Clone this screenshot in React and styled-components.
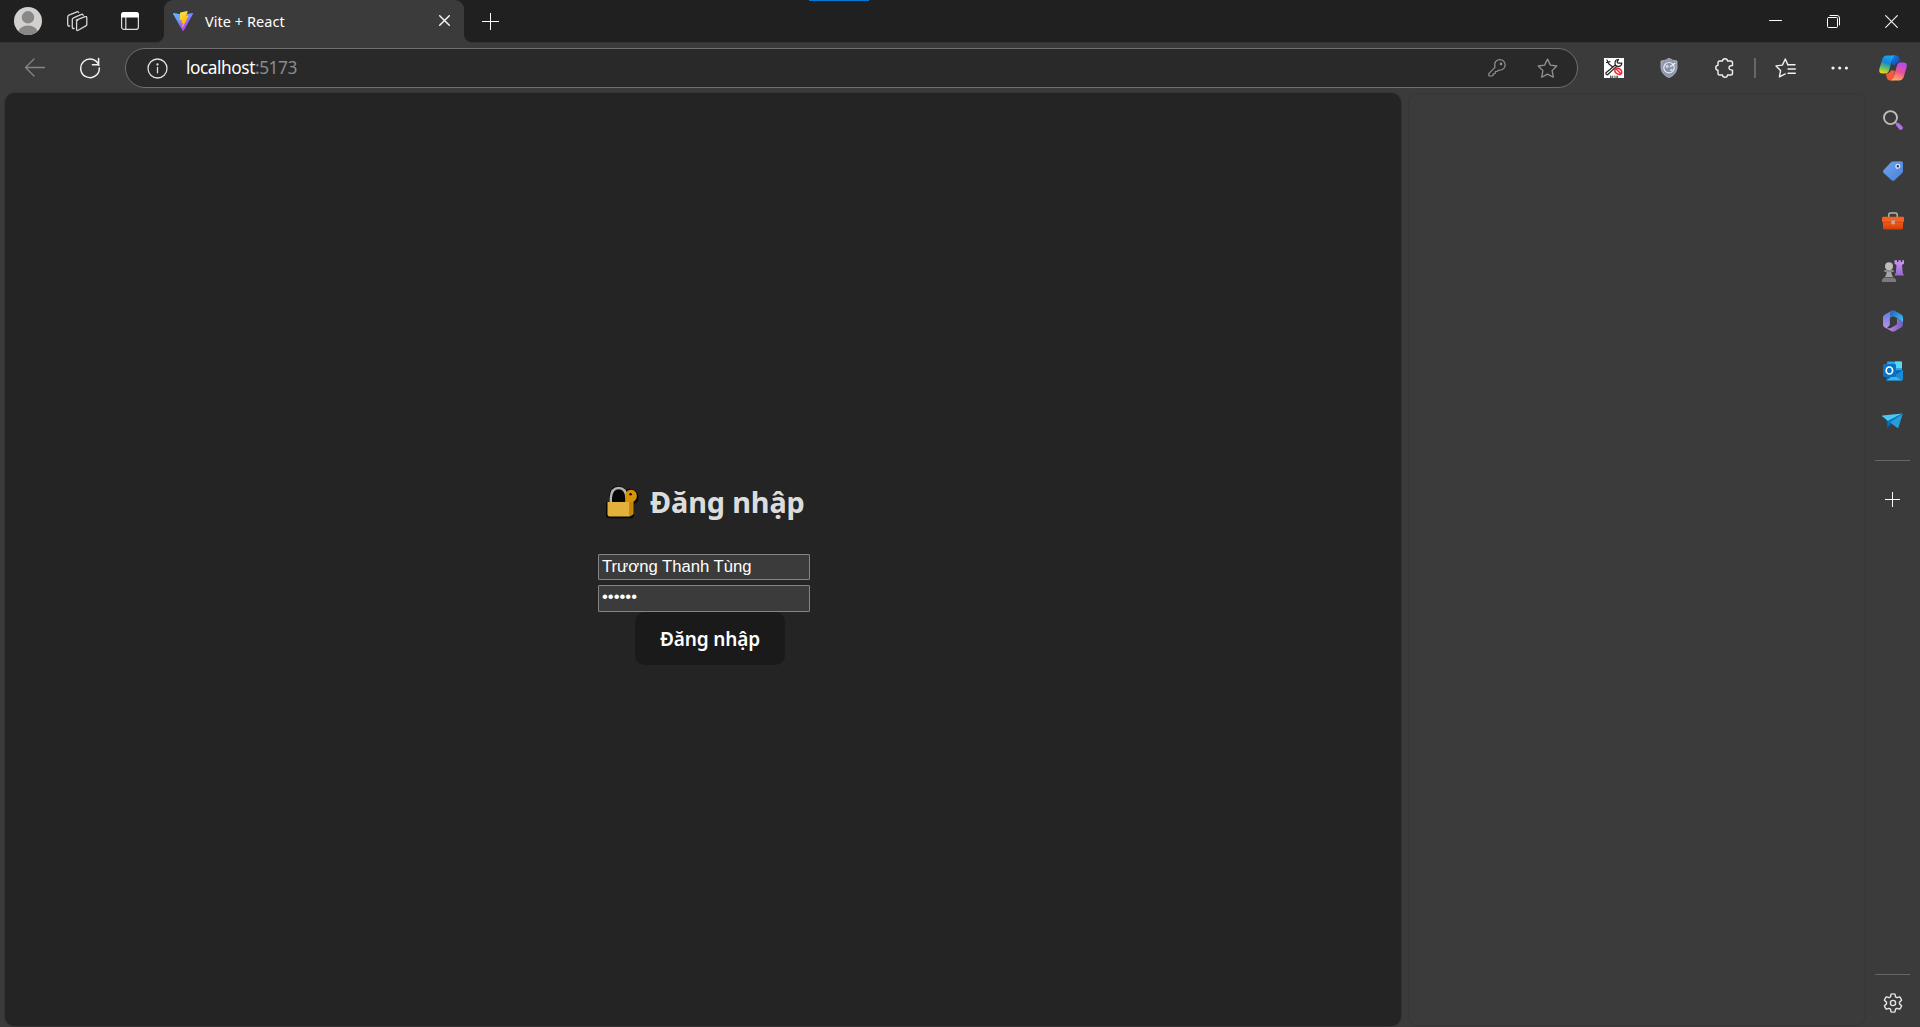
import React from 'react';
import styled, { createGlobalStyle } from 'styled-components';

const ui = '"Noto Sans", "Open Sans", sans-serif';

const GlobalStyle = createGlobalStyle`
  * { box-sizing: border-box; }
  html, body { margin: 0; background: #3b3b3b; overflow: hidden; }
`;

const Window = styled.div`
  display: flex;
  flex-direction: column;
  width: 1920px;
  height: 1027px;
  background: #3b3b3b;
  color: #fff;
  font-family: ${ui};
`;

const Icon = styled.svg`
  display: block;
  flex: none;
  fill: none;
  stroke: ${p => p.$color || 'none'};
  stroke-width: ${p => p.$w || 1.3};
  stroke-linecap: ${p => p.$cap || 'round'};
  stroke-linejoin: round;
`;

/* ---------- title bar ---------- */
const TitleBar = styled.header`
  display: flex;
  height: 43px;
  flex: none;
`;
const TitleLeft = styled.div`
  display: flex;
  align-items: center;
  width: 164px;
  height: 42px;
  padding-left: 14px;
  background: #202020;
  border-bottom-right-radius: 8px;
  box-shadow: 0 1px 0 #343434;
`;
const TitleRight = styled.div`
  position: relative;
  display: flex;
  align-items: center;
  flex: 1;
  height: 42px;
  padding-left: 18px;
  background: #202020;
  border-bottom-left-radius: 8px;
  box-shadow: 0 1px 0 #343434;
`;
const DragHandle = styled.div`
  position: absolute;
  left: 345px;
  top: 0;
  width: 60px;
  height: 1px;
  background: #0078d7;
`;
const TabSlot = styled.div`
  width: 300px;
  background: linear-gradient(#202020 50%, #3b3b3b 50%);
`;
const Tab = styled.div`
  display: flex;
  align-items: center;
  height: 43px;
  padding: 0 14px 2px 9px;
  background: #3b3b3b;
  border-radius: 9px 9px 0 0;
`;
const TabTitle = styled.span`
  flex: 1;
  margin-left: 12px;
  font-size: 14.5px;
  line-height: 20px;
  letter-spacing: 0.05px;
  white-space: nowrap;
`;
const WindowButtons = styled.div`
  display: flex;
  gap: 45px;
  margin-left: auto;
  padding: 1px 22px 0 0;
`;
const Gap = styled.div`
  flex: none;
  width: ${p => p.$w || 1}px;
  height: ${p => p.$h || 0}px;
`;

/* ---------- toolbar ---------- */
const Toolbar = styled.div`
  display: flex;
  align-items: center;
  flex: none;
  height: 50px;
  padding-left: 24px;
`;
const AddressBar = styled.div`
  display: flex;
  align-items: center;
  width: 1453px;
  height: 40px;
  margin: 0 26px 0 24px;
  padding: 0 19px 0 21px;
  background: #292929;
  border: 1px solid #6f6f6f;
  border-radius: 20px;
`;
const Url = styled.span`
  flex: 1;
  margin-left: 18px;
  font-size: 17.3px;
  line-height: 24px;
  letter-spacing: -0.45px;
  white-space: nowrap;
`;
const Port = styled.span`
  color: #8c8c8c;
`;
const Divider = styled.div`
  flex: none;
  width: ${p => (p.$horizontal ? '35px' : '2px')};
  height: ${p => (p.$horizontal ? '1px' : '20px')};
  background: #666;
`;

/* ---------- body ---------- */
const Body = styled.div`
  display: flex;
  flex: 1;
  min-height: 0;
  padding-left: 5px;
`;
const Page = styled.main`
  width: 1396px;
  height: 933px;
  padding: 384px 0 0 593px;
  background: #242424;
  border-radius: 10px;
  box-shadow: 0 0 2px #242424;
`;
const SidePanel = styled.aside`
  width: 458px;
  height: 933px;
  margin-left: 7px;
  border: 1px solid #363636;
  border-radius: 10px;
`;
const Sidebar = styled.nav`
  display: flex;
  flex-direction: column;
  align-items: center;
  width: 53px;
  height: 934px;
  padding: 15px 0 13px;
`;
const SideItem = styled.div`
  display: grid;
  place-items: center;
  width: 24px;
  height: 24px;
  margin-bottom: 26px;
  &:first-child { margin-bottom: 27px; }
`;
const Spacer = styled.div`
  flex: 1;
`;

/* ---------- login form ---------- */
const Form = styled.form`
  display: flex;
  flex-direction: column;
  align-items: flex-start;
`;
const Heading = styled.h2`
  display: flex;
  align-items: center;
  height: 50px;
  margin: 0 0 27px;
  padding-left: 7px;
  color: rgba(255, 255, 255, 0.87);
  font-size: 28.8px;
  font-weight: 700;
  line-height: 50px;
  white-space: nowrap;
`;
const HeadingText = styled.span`
  margin-left: 11px;
  letter-spacing: -0.1px;
`;
const Field = styled.input`
  width: 212px;
  height: ${p => p.$h}px;
  margin: 0 0 ${p => p.$gap}px;
  padding: 1px 3px ${p => p.$bottom}px;
  background: #3b3b3b;
  border: 1px solid #858585;
  border-radius: 1px;
  color: #fff;
  font-family: "Liberation Sans", sans-serif;
  font-size: 16.67px;
  outline: none;
`;
const Submit = styled.button`
  width: 150px;
  height: 53px;
  margin-left: 37px;
  padding: 1px 0 0;
  background: #1a1a1a;
  border: 0;
  border-radius: 10px;
  color: #fff;
  font-family: ${ui};
  font-size: 19px;
  font-weight: 600;
  letter-spacing: -0.15px;
  white-space: nowrap;
`;

const Avatar = () => (
  <Icon width="28" height="28" viewBox="0 0 28 28">
    <defs><clipPath id="av"><circle cx="14" cy="14" r="14" /></clipPath></defs>
    <g clipPath="url(#av)">
      <rect width="28" height="28" fill="#d2d0ce" />
      <circle cx="14" cy="10.3" r="6.2" fill="#8a8886" />
      <ellipse cx="14" cy="26.5" rx="10" ry="8" fill="#8a8886" />
    </g>
  </Icon>
);

const Workspaces = () => (
  <Icon width="22" height="22" viewBox="0 0 22 22" $color="#d6d6d6" $w={1.3}>
    <path d="M10.2 10.1 19 6.7q1.8-.6 1.8 1.1v6.6q0 1-1 1.5l-7.6 4.4q-1.6.9-1.6-.9v-7.3q0-1.4 1.2-1.9Z" />
    <path d="M8.200 18.300q-1.900.7-1.900-1.100V9.600q0-1.300 1.200-1.800l8-3.400q1.200-.5 1.700.9" />
    <path d="M3.700 15.800q-2 .7-2-1.200V7q0-1.300 1.200-1.800L11 1.800q1.200-.5 1.700.8" />
  </Icon>
);

const TabActions = () => (
  <Icon width="18" height="18" viewBox="0 0 18 18">
    <rect x=".6" y=".6" width="16.8" height="16.8" rx="2.5" stroke="#ddd" strokeWidth="1.2" />
    <path d="M0 3Q0 0 3 0h12q3 0 3 3v2.5H0Z" fill="#fff" />
    <path d="M4.8 5v12.4" stroke="#ddd" strokeWidth="1.2" />
  </Icon>
);

const Vite = () => (
  <Icon width="20" height="20" viewBox="0 0 32 32">
    <defs>
      <linearGradient id="va" x1="0" y1="0" x2=".6" y2="1"><stop stopColor="#41d1ff" /><stop offset="1" stopColor="#bd34fe" /></linearGradient>
      <linearGradient id="vb" x1=".4" y1="0" x2=".6" y2="1"><stop stopColor="#ffea83" /><stop offset=".1" stopColor="#ffdd35" /><stop offset="1" stopColor="#ffa800" /></linearGradient>
    </defs>
    <path d="M31.9 4.7 17 31.4q-.8 1.2-1.6 0L.1 4.7q-.5-1.4 1-1.4L16 6l14.9-2.8q1.5.1 1 1.5Z" fill="url(#va)" />
    <path d="M23 0 12 2.2q-.6.1-.7.8l-.7 11.5q0 .8.8.7l3-.7-.9 4.5q-.1.7.6.6l1.9-.6-1.4 7.1q-.1 1.5.9.2l9.2-18.4q.3-.8-.6-.7l-3.2.6L23.500.9Q23.700 0 23 0Z" fill="url(#vb)" />
  </Icon>
);

const Close = ({ size, w = 1.3 }) => (
  <Icon width={size} height={size} viewBox={`0 0 ${size} ${size}`} $color="#f2f2f2" $w={w}>
    <path d={`M.7.7 ${size - 0.7} ${size - 0.7}M${size - 0.7}.7.7 ${size - 0.7}`} />
  </Icon>
);

const Plus = ({ size }) => (
  <Icon width={size} height={size} viewBox={`0 0 ${size} ${size}`} $color="#fff" $w={1} $cap="butt">
    <path d={`M0 ${size / 2}h${size}M${size / 2} 0v${size}`} />
  </Icon>
);

const Minimize = () => (
  <Icon width="13" height="13" viewBox="0 0 13 13" $color="#fff" $w={1}><path d="M.5 5.5h12" /></Icon>
);
const Restore = () => (
  <Icon width="13" height="13" viewBox="0 0 13 13" $color="#fff" $w={1}>
    <rect x=".5" y="2.5" width="10" height="10" rx="1" />
    <path d="M3 .5h7q2.500 0 2.500 2.500v7" />
  </Icon>
);

const Back = () => (
  <Icon width="22" height="20" viewBox="0 0 22 20" $color="#858585" $w={1.3}><path d="M20.5 9.5h-19M10 1 1.5 9.5 10 18" /></Icon>
);
const Refresh = () => (
  <Icon width="22" height="22" viewBox="0 0 22 22" $color="#f2f2f2" $w={1.5}>
    <path d="M19.8 8.3A9.3 9.3 0 1 0 20.3 11M19.6 1.6v6.1h-6.2" />
  </Icon>
);
const Info = () => (
  <Icon width="21" height="21" viewBox="0 0 21 21" $color="#e0e0e0" $w={1.3}>
    <circle cx="10.5" cy="10.5" r="9.5" />
    <path d="M10.5 9.4v5.4" />
    <circle cx="10.5" cy="6.5" r=".5" fill="#e0e0e0" />
  </Icon>
);
const Key = () => (
  <Icon width="18" height="18" viewBox="0 0 18 18" $color="#929292" $w={1.2}>
    <path d="M7 8.4C6.2 5.2 6.8 3.6 8.1 2.2a5.3 5.3 0 0 1 7.5 0 5.2 5.2 0 0 1 0 7.4c-1.4 1.4-3 1.9-5 1.5l-1.3 1.2-1.9.3-.2 1.9-1.9.3-.2 1.5-1.1.7H1.800q-1 0-1-1v-1.400Z" />
    <circle cx="13" cy="4.9" r=".7" fill="#929292" />
  </Icon>
);
const starPath = 'M10.5 1.1 13.4 7.1l6.4.9-4.7 4.6 1.2 6.6-5.8-3.1-5.8 3.1 1.2-6.6L1.2 8l6.4-.9Z';
const Star = () => (
  <Icon width="21" height="21" viewBox="0 0 21 21" $color="#929292" $w={1.3}><path d={starPath} /></Icon>
);
const ToolsExtension = () => (
  <Icon width="20" height="20" viewBox="0 0 20 20">
    <rect width="20" height="20" fill="#fff" />
    <g stroke="#222" strokeWidth="1.2">
      <path d="m3 2 1.700 3.800L8.700 9M2.500 4.500 6 3.700" />
      <path d="M17.800 5.200a3.400 3.400 0 1 1-3.200-3.700l-1.500 2.300.9 1.300 2 .1ZM11.300 7 2 14.700q-.6 2 1.600 2.100L12.500 8.400" />
    </g>
    <path d="m11.500 10.500 5.500 5.200M10.800 11.300q-.4 4.500 4.800 5.200 2.900-.7 2-3.400-1.700-3.300-5.500-3" stroke="#f22431" strokeWidth="1.4" />
    <path d="M6.500 18v1.700M8.300 18v1.700M10.200 18v1.700M12 18v1.700M13.600 18v1.700M6.500 19h2M12 19h1.600" stroke="#333" strokeWidth=".7" />
  </Icon>
);
const Shield = () => (
  <Icon width="18" height="20" viewBox="0 0 18 20">
    <path d="M9 .4Q5 3 1 3v7q1 7 8 9.600Q16 17 17 10V3q-4 0-8-2.600Z" fill="#8e99ad" stroke="#b6bfce" strokeWidth=".8" />
    <circle cx="9" cy="9.700" r="5.200" fill="#8794a9" stroke="#e8ecf3" strokeWidth="1.200" />
    <path d="m5.400 7.400 2.200-.6 1.400 1.800-1.500 1.500-1.600-.6m4 3 1.400-2 1.600 1-1.400 2Z" fill="#d3d9e2" />
    <path d="m10.500 8.500 4.500-3.200" stroke="#f3f5f9" strokeWidth="1.200" />
  </Icon>
);
const Puzzle = () => (
  <Icon width="20" height="20" viewBox="0 0 20 20" $color="#f0f0f0" $w={1.4}>
    <path d="M4.800 3h2.700c.1-3 4.900-3 5 0h3.200q1.800 0 1.800 1.800v2.800c-4.700-.5-4.700 4.900 0 4.500v3.100q0 1.800-1.800 1.800h-3.200c-.1 3-4.900 3-5 0H4.800Q3 17 3 15.200v-2.900c-3-.1-3-4.800 0-4.900V4.800Q3 3 4.800 3Z" />
  </Icon>
);
const Favorites = () => (
  <Icon width="21" height="20" viewBox="0 0 21 20" $color="#f0f0f0" $w={1.4}>
    <path d="M13 7.100 10.300 1 7.400 7.100 1 7.900l4.600 4.600-1.200 6.400 5.800-3M13 6.800h7M13 11h7.300M13 15.200h7.300" />
  </Icon>
);
const Dots = () => (
  <Icon width="18" height="4" viewBox="0 0 18 4">
    <g fill="#f2f2f2"><circle cx="2" cy="2" r="1.6" /><circle cx="8.7" cy="2" r="1.6" /><circle cx="15.4" cy="2" r="1.6" /></g>
  </Icon>
);
const Copilot = () => (
  <Icon width="28" height="26" viewBox="0 0 28 26">
    <defs>
      <linearGradient id="ca" x1=".6" y1="0" x2=".3" y2="1"><stop stopColor="#16aaf0" /><stop offset=".4" stopColor="#1684d8" /><stop offset=".65" stopColor="#4bb878" /><stop offset="1" stopColor="#ecd51b" /></linearGradient>
      <linearGradient id="cb" x1=".6" y1="0" x2=".3" y2="1"><stop stopColor="#b24cf4" /><stop offset=".5" stopColor="#ed5292" /><stop offset="1" stopColor="#ffb05a" /></linearGradient>
      <linearGradient id="cc" x1="0" y1="0" x2="1" y2="1"><stop stopColor="#1c80de" /><stop offset="1" stopColor="#1238b8" /></linearGradient>
    </defs>
    <path d="M13 .5h4q2.500 0 3.200 2.400l1.200 4.200q-4 .2-5.600 3.500L13 9Z" fill="url(#cc)" />
    <path d="M8 .5h8q-2 1-2.800 4l-3.100 10.700q-1 3.200-4 3.200H3.500q-4.300 0-3-5l2.700-9Q4.400.5 8 .5Z" fill="url(#ca)" />
    <path d="M14 25.600h-3q-2.500 0-3.100-2.500l-1.100-4.200q3.700-.3 5.200-3.600l4 .5Z" fill="#f35b39" />
    <path d="M20 25.600h-8q2-.9 2.900-4l3-10.800q.9-3.200 4-3.200h2.700q4.200.1 2.900 5l-2.600 9q-1.300 4-4.900 4Z" fill="url(#cb)" />
  </Icon>
);

const SearchIcon = () => (
  <Icon width="20" height="20" viewBox="0 0 20 20">
    <path d="m12.500 12.500 2.300 2" stroke="#888" strokeWidth="2" />
    <path d="m15.200 15 2.600 2.800" stroke="#b46df0" strokeWidth="4" />
    <circle cx="7.500" cy="7.600" r="6.500" stroke="#bcbcbc" strokeWidth="1.900" />
  </Icon>
);
const Tag = () => (
  <Icon width="20" height="20" viewBox="0 0 20 20">
    <defs><linearGradient id="tg" x2="1" y2="1"><stop stopColor="#70a5f3" /><stop offset="1" stopColor="#497fd7" /></linearGradient></defs>
    <path d="M9.500.5 18 .2q2 0 2 2v8q0 1-.8 1.700l-7.300 7.200q-1.900 1.600-3.600 0L.9 12.200q-1.600-1.800 0-3.500L8 1.200Q8.700.5 9.500.5Z" fill="url(#tg)" />
    <circle cx="14.800" cy="5.300" r="1.900" fill="#263a5a" stroke="#dbe7fb" strokeWidth="1.300" />
  </Icon>
);
const Toolbox = () => (
  <Icon width="22" height="18" viewBox="0 0 22 18">
    <defs><linearGradient id="tb" x2="0" y2="1"><stop stopColor="#fb6b27" /><stop offset="1" stopColor="#d63b06" /></linearGradient></defs>
    <path d="M6.800 5V2.500Q6.800 1 8.300 1h5.400q1.500 0 1.500 1.500V5" stroke="#b5b5b5" strokeWidth="1.500" />
    <rect x="1" y="7" width="20" height="10.500" rx="1.400" fill="url(#tb)" />
    <rect y="4.700" width="22" height="5.500" rx="1" fill="#f5611e" />
    <path d="M.5 10.200h21" stroke="#c93d0b" strokeWidth=".8" />
    <path d="M9.300 8.600h3.600v2.800q-1.800 2-3.600 0Z" fill="#b5b0ad" />
  </Icon>
);
const Chess = () => (
  <Icon width="22" height="22" viewBox="0 0 22 22">
    <defs>
      <linearGradient id="cr" x2="0" y2="1"><stop stopColor="#cf94f5" /><stop offset="1" stopColor="#9568cf" /></linearGradient>
    </defs>
    <path d="M12.500.3H15v1.600h1.400V.3h2.400v1.600h1.400V.3H22v3.500l-2 1.200.7 7.800 1.300 2.800H12.500l1.300-2.800.7-7.800-2-1.200Z" fill="url(#cr)" />
    <path d="M5 10h4q.2 4 2 7H3q1.800-3 2-7Z" fill="#a5a5a5" />
    <circle cx="7" cy="6.200" r="4" fill="#bcbcbc" />
    <rect x="2" y="10" width="10" height="2" rx="1" fill="#8b8b8b" />
    <path d="M2 17.500h10l2 2V22H0v-2.500Z" fill="#7b7b7b" />
  </Icon>
);
const Office = () => (
  <Icon width="20" height="22" viewBox="0 0 20 22">
    <defs>
      <linearGradient id="oa" x2="0" y2="1"><stop stopColor="#5f7bdf" /><stop offset="1" stopColor="#bb91e9" /></linearGradient>
      <linearGradient id="ob" x2="1" y2="1"><stop stopColor="#295bb0" /><stop offset="1" stopColor="#42c5fa" /></linearGradient>
      <linearGradient id="oc" x2="1"><stop stopColor="#c08be0" /><stop offset="1" stopColor="#725cbe" /></linearGradient>
    </defs>
    <path d="M9 .5 1.500 4.800Q0 5.700 0 7.500v7.300q0 1.700 1.500 2.500l2 1.100 3.400-3.300V8Z" fill="url(#oa)" />
    <path d="M8.500.8q1.700-.9 3.300 0l6.500 3.700Q20 5.600 20 7.500v5l-6.200-4.700q-1-.8-2.400-.5L7 8.500V3.500Z" fill="url(#ob)" />
    <path d="M3.300 18.200h4.100l6.300-3.700V8.100l6.200 4.400v2.200q0 1.700-1.400 2.500l-6.800 4q-1.600.9-3.200 0Z" fill="url(#oc)" />
    <path d="m7 7.700 3.100-1.500 3.700 2v5.900L10 16.300l-3.100-1.800Z" fill="#3b3b3b" />
  </Icon>
);
const Outlook = () => (
  <Icon width="20" height="20" viewBox="0 0 20 20">
    <rect x="4" y=".5" width="15" height="12" rx="1" fill="#2aa6e8" />
    <path d="M12 .5h6q1 0 1 1V7h-7Z" fill="#54daf8" />
    <path d="m3 10 16.500-1v9q0 1.500-1.500 1.500H3Z" fill="#1261a8" />
    <path d="m3 19.500 8-5.500 8.500 5.500Z" fill="#36b6ed" />
    <path d="m12 14 8-5v9q0 1.500-1.500 1.500Z" fill="#188bd4" />
    <rect y="3" width="13" height="13" rx="1.300" fill="#0872c7" />
    <ellipse cx="6.400" cy="9.500" rx="3.200" ry="3.500" stroke="#fff" strokeWidth="1.700" />
  </Icon>
);
const Send = () => (
  <Icon width="21" height="16" viewBox="0 0 21 16">
    <path d="M4 6.200 5.300 15l4.800-4L19 1Z" fill="#0c58a0" />
    <path d="M20.500.6.4 2.600q-.8.2 0 .8L6 8Z" fill="#48c9f4" />
    <path d="M20.800.7 7.400 9.100l8 6q.7.4 1-.3Z" fill="#239edb" />
    <path d="M20 .8 6 8l-.7 7L8 9.600Z" fill="#1272b9" />
  </Icon>
);
const Gear = () => (
  <Icon width="22" height="22" viewBox="0 0 22 22" $color="#e4e4e4" $w={1.4}>
    <path d="M9 1.200q2-.4 4 0l.5 2.700 1.500.9 2.600-.9q1.400 1.500 2 3.500l-2.100 1.800v1.800l2.100 1.800q-.6 2-2 3.500l-2.600-.9-1.500.9-.5 2.700q-2 .4-4 0l-.5-2.700-1.500-.9-2.600.9q-1.400-1.500-2-3.500L4.500 11V9.200L2.400 7.400q.6-2 2-3.500l2.600.9 1.500-.9Z" transform="translate(0 .9)" />
    <circle cx="11" cy="11" r="2.600" />
  </Icon>
);
const Lock = () => (
  <Icon width="34" height="34" viewBox="0 0 34 34">
    <path d="M1 17h3v-3Q4 1 13.500 1q4.500 0 7 4.200 3-2.500 7-1 6 2.500 6 8 0 5-4.500 7v11q0 3-3 3H4q-3 0-3-3Z" fill="#070707" />
    <path d="M5.800 17v-4Q6.500 3 13.700 3 21 3 21.500 13v4" stroke="#b4b4b4" strokeWidth="2.400" strokeLinecap="butt" />
    <path d="M21 14q-2.500-6 2-8.500 5.500-2.500 8.200 2.200 2.100 5.800-2.700 9V29l-4 2.500-3-2Z" fill="#d49308" />
    <path d="M2.500 17h21.800v14.500H4.500q-2 0-2-2Z" fill="#e3b13b" />
    <path d="M24.300 17h3.200v13l-3.200 1.500Z" fill="#c58508" />
    <circle cx="25.600" cy="9.300" r="1.300" fill="#171004" />
  </Icon>
);

const apps = [SearchIcon, Tag, Toolbox, Chess, Office, Outlook, Send];

export default function App() {
  return (
    <Window>
      <GlobalStyle />
      <TitleBar>
        <TitleLeft>
          <Avatar />
          <Gap $w={24} />
          <Workspaces />
          <Gap $w={33} />
          <TabActions />
        </TitleLeft>
        <TabSlot>
          <Tab>
            <Vite />
            <TabTitle>Vite + React</TabTitle>
            <Close size={11} w={1.5} />
          </Tab>
        </TabSlot>
        <TitleRight>
          <Plus size={17} />
          <DragHandle />
          <WindowButtons>
            <Minimize />
            <Restore />
            <Close size={13} w={1.2} />
          </WindowButtons>
        </TitleRight>
      </TitleBar>

      <Toolbar>
        <Back />
        <Gap $w={33} />
        <Refresh />
        <AddressBar>
          <Info />
          <Url>localhost<Port>:5173</Port></Url>
          <Key />
          <Gap $w={31} />
          <Star />
        </AddressBar>
        <ToolsExtension />
        <Gap $w={36} />
        <Shield />
        <Gap $w={37} />
        <Puzzle />
        <Gap $w={19} />
        <Divider />
        <Gap $w={19} />
        <Favorites />
        <Gap $w={35} />
        <Dots />
        <Gap $w={30} />
        <Copilot />
      </Toolbar>

      <Body>
        <Page>
          <Form onSubmit={e => e.preventDefault()}>
            <Heading>
              <Lock />
              <HeadingText>Đăng nhập</HeadingText>
            </Heading>
            <Field type="text" defaultValue="Trương Thanh Tùng" $h={26} $gap={5} $bottom={2} />
            <Field type="password" defaultValue="123456" $h={27} $gap={0} $bottom={5} />
            <Submit type="submit">Đăng nhập</Submit>
          </Form>
        </Page>
        <SidePanel />
        <Sidebar>
          {apps.map((AppIcon, i) => (
            <SideItem key={i}><AppIcon /></SideItem>
          ))}
          <Gap $h={1} />
          <Divider $horizontal />
          <Gap $h={31} />
          <Plus size={15} />
          <Spacer />
          <Divider $horizontal />
          <Gap $h={17} />
          <Gear />
        </Sidebar>
      </Body>
    </Window>
  );
}
